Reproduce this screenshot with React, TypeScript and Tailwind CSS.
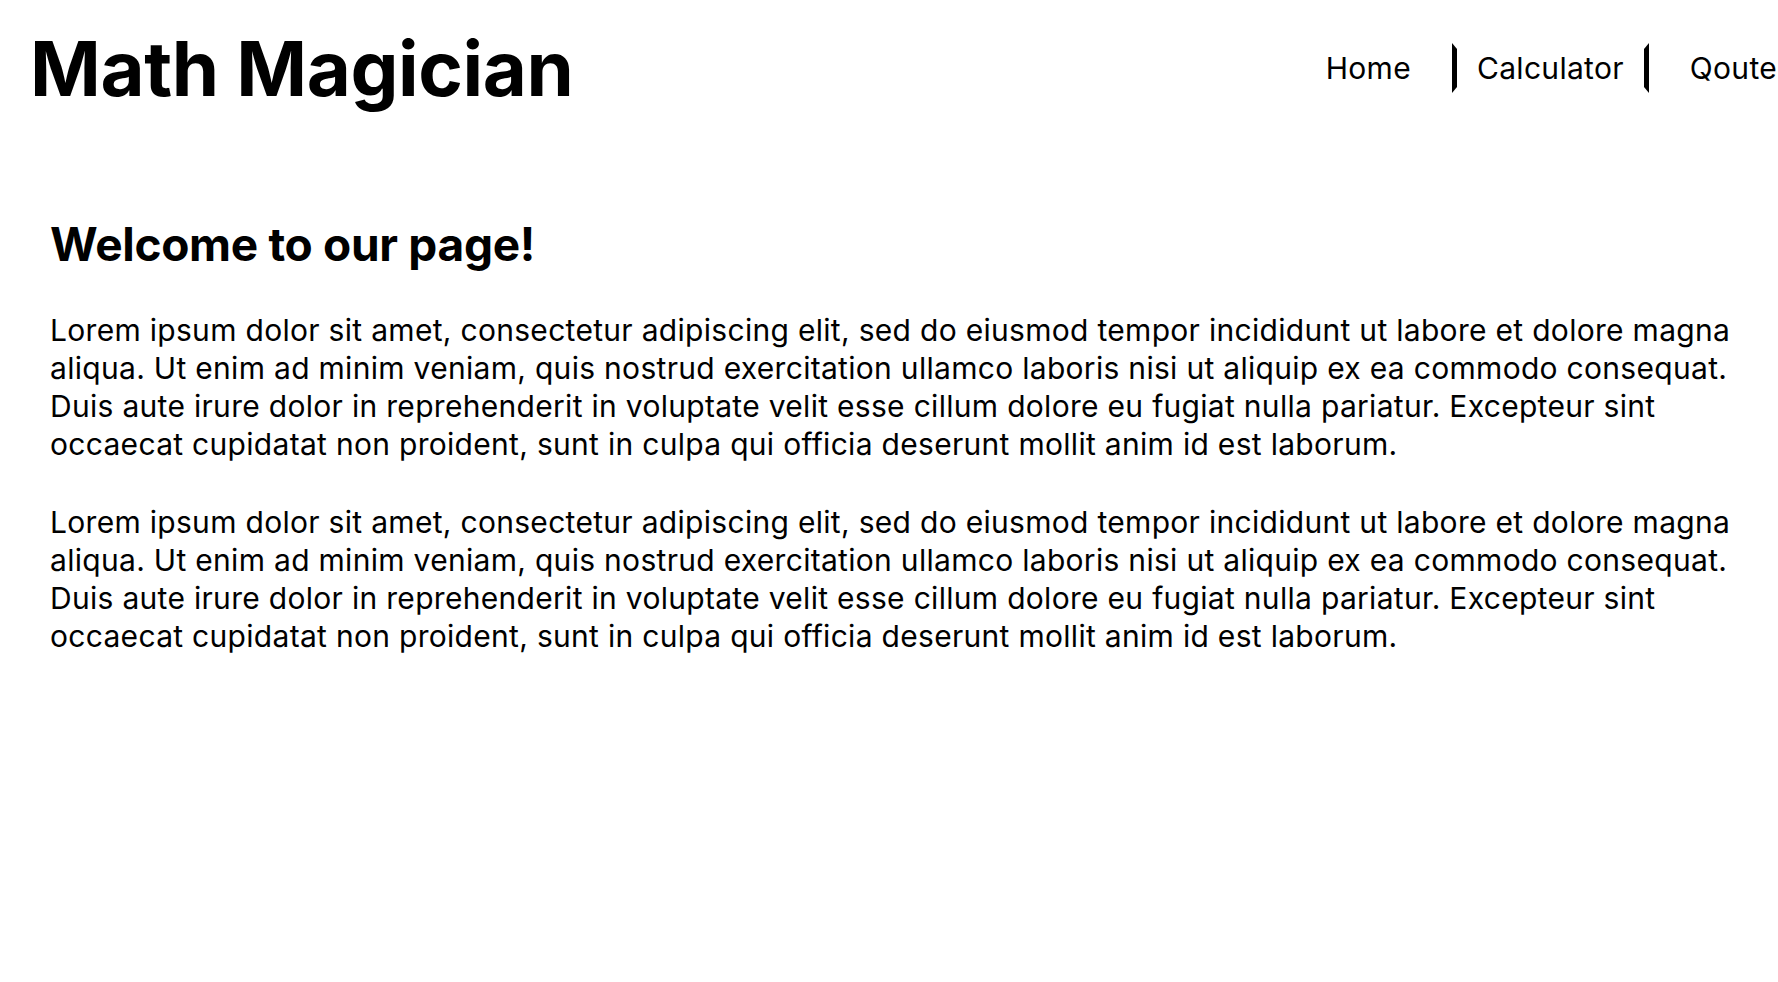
import React from 'react';

const links = ['Home', 'Calculator', 'Qoute'];

const lorem =
  'Lorem ipsum dolor sit amet, consectetur adipiscing elit, sed do eiusmod tempor incididunt ut labore et dolore magna aliqua. Ut enim ad minim veniam, quis nostrud exercitation ullamco laboris nisi ut aliquip ex ea commodo consequat. Duis aute irure dolor in reprehenderit in voluptate velit esse cillum dolore eu fugiat nulla pariatur. Excepteur sint occaecat cupidatat non proident, sunt in culpa qui officia deserunt mollit anim id est laborum.';

const App = () => {
  return (
    <div className="min-h-screen w-full overflow-hidden bg-white text-black font-['Inter',sans-serif]">
      {/* Header with title and nav */}
      <header className="flex items-center h-[136px] pl-[30px]">
        <h1 className="text-[76px] font-bold leading-none tracking-[-0.4px] shrink-0">Math Magician</h1>
        <nav className="ml-auto -mr-[19px] flex items-center gap-[21px] shrink-0">
          {links.map((link) => (
            <a
              key={link}
              href="#"
              className={
                link === 'Calculator'
                  ? 'text-[30px] leading-[38px] tracking-[0.3px] px-5 border-x-[5px] border-y-[6px] border-x-black border-y-transparent'
                  : 'text-[30px] leading-[38px] tracking-[0.3px] px-5 border-y-[6px] border-transparent'
              }
            >
              {link}
            </a>
          ))}
        </nav>
      </header>

      <main className="pl-[50px] pr-[38px] pt-[80px]">
        <h2 className="text-[46px] font-bold leading-tight tracking-[-0.3px]">Welcome to our page!</h2>
        <div className="mt-[37px] flex flex-col gap-[40px]">
          <p className="text-[30px] leading-[38px] tracking-[0.3px]">{lorem}</p>
          <p className="text-[30px] leading-[38px] tracking-[0.3px]">{lorem}</p>
        </div>
      </main>
    </div>
  );
};

export default App;
